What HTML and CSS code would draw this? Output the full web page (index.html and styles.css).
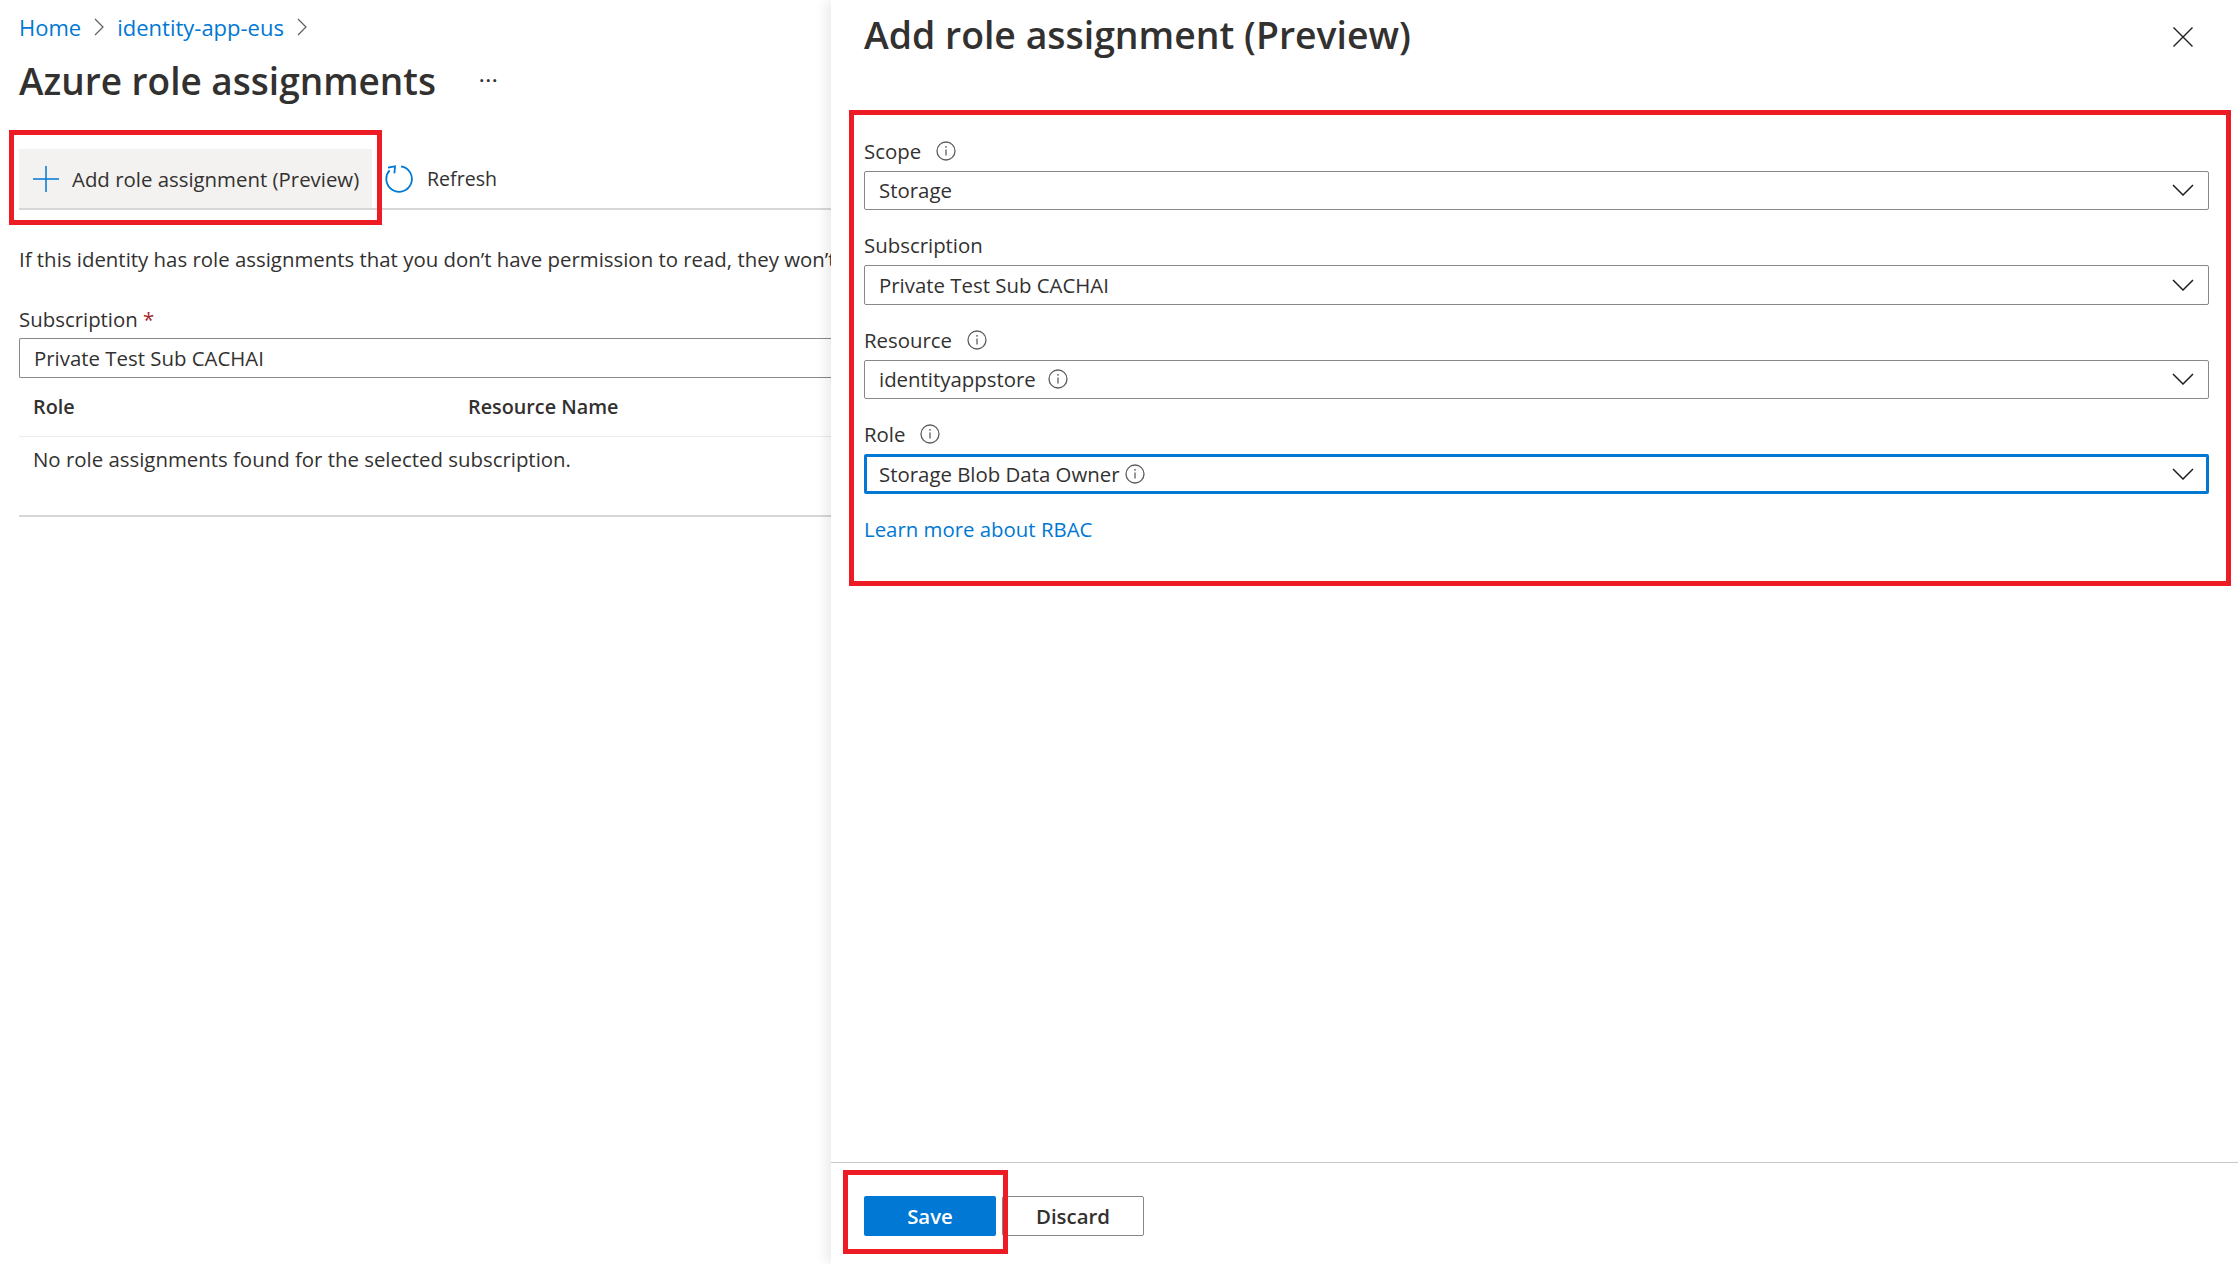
FILE: index.html
```html
<!DOCTYPE html>
<html>
    <head>
        <meta charset="utf-8">
        <title>Add role assignment (Preview)</title>
        <link rel="stylesheet" href="styles.css">
    </head>
    <body>
        <svg class="icon-defs" width="0" height="0">
            <symbol id="info" viewBox="0 0 20 20">
                <circle cx="10" cy="10" r="9" fill="none" stroke="#605e5c" stroke-width="1.3"/>
                <path d="M10 8.5v6" stroke="#605e5c" stroke-width="1.3"/>
                <circle cx="10" cy="5.8" r="0.9" fill="#605e5c"/>
            </symbol>
            <symbol id="chevron" viewBox="0 0 22 12">
                <path d="M1 1l10 10L21 1" fill="none" stroke="#201f1e" stroke-width="1.5"/>
            </symbol>
        </svg>

        <main class="blade">
            <nav class="crumbs">
                <a href="#">Home</a>
                <svg class="crumb-sep" viewBox="0 0 10 18"><path d="M1 1l8 8-8 8" fill="none" stroke="#605e5c" stroke-width="1.2"/></svg>
                <a href="#">identity-app-eus</a>
                <svg class="crumb-sep" viewBox="0 0 10 18"><path d="M1 1l8 8-8 8" fill="none" stroke="#605e5c" stroke-width="1.2"/></svg>
            </nav>
            <div class="title-row">
                <h1>Azure role assignments</h1>
                <span class="more">···</span>
            </div>
            <div class="toolbar">
                <button class="tool tool-active">
                    <svg class="tool-plus" viewBox="0 0 26 26"><path d="M13 0v26M0 13h26" stroke="#0078d4" stroke-width="1.5"/></svg>
                    Add role assignment (Preview)
                </button>
                <button class="tool tool-refresh">
                    <svg class="tool-spin" viewBox="0 0 28 28">
                        <path d="M16 1.3A12.8 12.8 0 1 1 4.6 5.4" fill="none" stroke="#0078d4" stroke-width="1.8"/>
                        <path d="M3 2.6L10 1.3L9.4 8.4" fill="none" stroke="#0078d4" stroke-width="1.8"/>
                    </svg>
                    Refresh
                </button>
            </div>
            <p class="notice">If this identity has role assignments that you don’t have permission to read, they won’t</p>
            <label class="sub-label">Subscription <span class="req">*</span></label>
            <div class="sub-input">Private Test Sub CACHAI</div>
            <div class="table-head">
                <span class="col-role">Role</span>
                <span>Resource Name</span>
            </div>
            <div class="table-empty">No role assignments found for the selected subscription.</div>
        </main>

        <aside class="panel">
            <header class="panel-head">
                <h2>Add role assignment (Preview)</h2>
                <svg class="close" viewBox="0 0 20 20"><path d="M0.5 0.5l19 19M19.5 0.5l-19 19" stroke="#201f1e" stroke-width="1.4"/></svg>
            </header>
            <form class="panel-form">
                <div class="field">
                    <div class="field-label">Scope <svg class="info"><use href="#info"/></svg></div>
                    <div class="select"><span>Storage</span><svg class="chevron"><use href="#chevron"/></svg></div>
                </div>
                <div class="field">
                    <div class="field-label">Subscription</div>
                    <div class="select"><span>Private Test Sub CACHAI</span><svg class="chevron"><use href="#chevron"/></svg></div>
                </div>
                <div class="field">
                    <div class="field-label">Resource <svg class="info"><use href="#info"/></svg></div>
                    <div class="select"><span>identityappstore</span><svg class="info value-info"><use href="#info"/></svg><svg class="chevron"><use href="#chevron"/></svg></div>
                </div>
                <div class="field">
                    <div class="field-label">Role <svg class="info"><use href="#info"/></svg></div>
                    <div class="select select-focus"><span>Storage Blob Data Owner</span><svg class="info role-info"><use href="#info"/></svg><svg class="chevron"><use href="#chevron"/></svg></div>
                </div>
                <a class="learn" href="#">Learn more about RBAC</a>
            </form>
            <footer class="panel-foot">
                <button type="button" class="btn btn-primary">Save</button>
                <button type="button" class="btn btn-plain">Discard</button>
            </footer>
        </aside>

        <!-- red callouts drawn over the screenshot -->
        <div class="callout callout-add"></div>
        <div class="callout callout-form"></div>
        <div class="callout callout-save"></div>
    </body>
</html>
```

FILE: styles.css
```css
* {
    box-sizing: border-box;
}
html, body {
    height: 100%;
}
body {
    margin: 0;
    width: 2238px;
    height: 1264px;
    display: flex;
    position: relative;
    overflow: hidden;
    background: #fff;
    color: #323130;
    font-family: "Open Sans", "Noto Sans", sans-serif;
    font-size: 20.4px;
}
a {
    color: #0078d4;
    text-decoration: none;
}
button {
    font: inherit;
    color: inherit;
}
.icon-defs {
    position: absolute;
}

/* left blade */
.blade {
    width: 831px;
    flex-shrink: 0;
    padding-left: 19px;
    overflow: hidden;
    white-space: nowrap;
}
.crumbs {
    height: 54px;
    display: flex;
    align-items: center;
    font-size: 22px;
}
.crumb-sep {
    width: 10px;
    height: 18px;
    margin: 0 13px;
}
.title-row {
    height: 53px;
    display: flex;
    align-items: center;
}
h1 {
    margin: 0;
    font-size: 37px;
    font-weight: 600;
}
.more {
    margin-left: 43px;
    font-size: 20px;
    font-weight: 600;
    letter-spacing: 1px;
}
.toolbar {
    margin-top: 42px;
    height: 61px;
    display: flex;
    border-bottom: 2px solid #d8d7d5;
}
.tool {
    height: 59px;
    border: 0;
    background: none;
    display: flex;
    align-items: center;
    padding: 0;
}
.tool-active {
    width: 353px;
    background: #f3f2f1;
    padding-left: 14px;
}
.tool-plus {
    width: 26px;
    height: 26px;
    margin-right: 13px;
}
.tool-refresh {
    margin-left: 13px;
    font-size: 19.6px;
}
.tool-spin {
    width: 28px;
    height: 28px;
    margin-right: 14px;
}
.notice {
    margin: 35px 0 0;
    height: 28px;
    line-height: 28px;
}
.sub-label {
    display: block;
    margin-top: 32px;
    height: 28px;
    line-height: 28px;
}
.req {
    color: #a4262c;
}
.sub-input {
    height: 40px;
    line-height: 38px;
    padding-left: 14px;
    border: 1px solid #8a8886;
    border-right: 0;
    border-radius: 2px 0 0 2px;
    margin-top: 5px;
}
.table-head {
    height: 59px;
    display: flex;
    align-items: center;
    padding: 0 0 2px 14px;
    font-weight: 600;
    font-size: 19.8px;
    border-bottom: 1px solid #edebe9;
}
.col-role {
    width: 435px;
}
.table-empty {
    height: 80px;
    padding: 8px 0 0 14px;
    line-height: 28px;
    border-bottom: 2px solid #d8d7d5;
}

/* right panel */
.panel {
    flex: 1;
    height: 1264px;
    display: flex;
    flex-direction: column;
    background: #fff;
    box-shadow: -4px 0 12px rgba(0, 0, 0, 0.09);
    z-index: 1;
}
.panel-head {
    height: 110px;
    display: flex;
    justify-content: space-between;
    padding: 5px 45px 0 33px;
}
h2 {
    margin: 0;
    font-size: 37.4px;
    font-weight: 600;
    line-height: 60px;
}
.close {
    width: 20px;
    height: 20px;
    margin-top: 22px;
}
.panel-form {
    flex: 1;
    padding: 25.5px 29px 0 33px;
}
.field {
    height: 94.6px;
}
.field-label {
    height: 35px;
    padding-bottom: 5px;
    display: flex;
    align-items: center;
}
.info {
    width: 20px;
    height: 20px;
    margin-left: 15px;
}
.select {
    height: 39.5px;
    display: flex;
    align-items: center;
    padding: 0 14px 0 14px;
    border: 1px solid #8a8886;
    border-radius: 2px;
}
.select span {
    flex: none;
}
.select-focus {
    height: 40px;
    border: 3px solid #0078d4;
    padding-left: 12px;
    padding-right: 12px;
}
.value-info {
    margin-left: 12px;
}
.role-info {
    margin-left: 5px;
}
.chevron {
    width: 22px;
    height: 12px;
    margin-left: auto;
}
.learn {
    display: block;
    margin-top: 1px;
    line-height: 28px;
}
.panel-foot {
    height: 102px;
    display: flex;
    gap: 6px;
    padding: 33px 0 0 33px;
    border-top: 1px solid #c8c6c4;
}
.btn {
    height: 40px;
    border-radius: 2px;
    padding: 0 0 1px;
    font-weight: 600;
}
.btn-primary {
    width: 132px;
    background: #0078d4;
    border: 0;
    color: #fff;
}
.btn-plain {
    width: 142px;
    background: #fff;
    border: 1px solid #8a8886;
}

/* callouts */
.callout {
    position: absolute;
    border: 5px solid #ed1c24;
    z-index: 2;
}
.callout-add {
    left: 9px;
    top: 130px;
    width: 373px;
    height: 95px;
}
.callout-form {
    left: 849px;
    top: 110px;
    width: 1382px;
    height: 476px;
}
.callout-save {
    left: 843px;
    top: 1170px;
    width: 165px;
    height: 84px;
}
```
